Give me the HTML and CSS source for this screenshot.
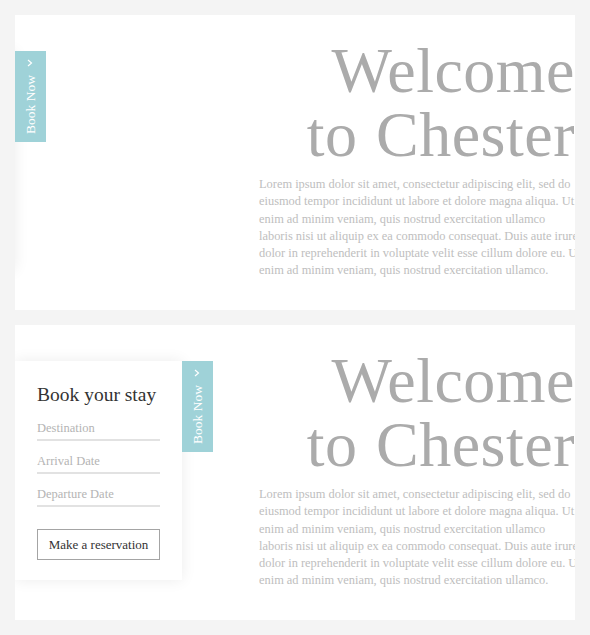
FILE: index.html
```html
<!DOCTYPE html>
<html lang="en">
<head>
    <meta charset="UTF-8">
    <meta name="viewport" content="width=device-width, initial-scale=1.0">
    <title>Welcome to Chester</title>
    <link rel="stylesheet" href="styles.css">
</head>
<body>
    <!-- Panneau 1 : formulaire replié -->
    <section class="panel">
        <aside class="booking closed">
            <h2>Book your stay</h2>
            <input class="field" type="text" placeholder="Destination">
            <input class="field" type="text" placeholder="Arrival Date">
            <input class="field" type="text" placeholder="Departure Date">
            <button class="reserve">Make a reservation</button>
            <button class="book-tab">
                <span>Book Now</span>
                <svg class="chevron" width="6" height="8" viewBox="0 0 6 8"><path d="M1 1l3.5 3L1 7" fill="none" stroke="#fff" stroke-width="1.2"/></svg>
            </button>
        </aside>
        <div class="hero">
            <h1>Welcome<br>to Chester</h1>
            <p>Lorem ipsum dolor sit amet, consectetur adipiscing elit, sed do<br>
               eiusmod tempor incididunt ut labore et dolore magna aliqua. Ut<br>
               enim ad minim veniam, quis nostrud exercitation ullamco<br>
               laboris nisi ut aliquip ex ea commodo consequat. Duis aute irure<br>
               dolor in reprehenderit in voluptate velit esse cillum dolore eu. Ut<br>
               enim ad minim veniam, quis nostrud exercitation ullamco.</p>
        </div>
    </section>

    <!-- Panneau 2 : formulaire ouvert -->
    <section class="panel">
        <aside class="booking">
            <h2>Book your stay</h2>
            <input class="field" type="text" placeholder="Destination">
            <input class="field" type="text" placeholder="Arrival Date">
            <input class="field" type="text" placeholder="Departure Date">
            <button class="reserve">Make a reservation</button>
            <button class="book-tab">
                <span>Book Now</span>
                <svg class="chevron" width="6" height="8" viewBox="0 0 6 8"><path d="M1 1l3.5 3L1 7" fill="none" stroke="#fff" stroke-width="1.2"/></svg>
            </button>
        </aside>
        <div class="hero">
            <h1>Welcome<br>to Chester</h1>
            <p>Lorem ipsum dolor sit amet, consectetur adipiscing elit, sed do<br>
               eiusmod tempor incididunt ut labore et dolore magna aliqua. Ut<br>
               enim ad minim veniam, quis nostrud exercitation ullamco<br>
               laboris nisi ut aliquip ex ea commodo consequat. Duis aute irure<br>
               dolor in reprehenderit in voluptate velit esse cillum dolore eu. Ut<br>
               enim ad minim veniam, quis nostrud exercitation ullamco.</p>
        </div>
    </section>
</body>
</html>
```

FILE: styles.css
```css
body {
    font-family: "Liberation Serif", "Times New Roman", serif;
    margin: 0;
    padding: 15px;
    display: flex;
    flex-direction: column;
    gap: 15px;
    background-color: #f4f4f4;
}

.panel {
    position: relative;
    height: 295px;
    background-color: #fff;
    overflow: hidden;
}

/* Formulaire de réservation */
.booking {
    position: absolute;
    top: 36px;
    left: 0;
    width: 167px;
    height: 219px;
    box-sizing: border-box;
    padding: 21px 22px 0;
    display: flex;
    flex-direction: column;
    background-color: #fff;
    box-shadow: 0 0 14px rgba(0, 0, 0, 0.08);
    transition: transform 0.3s;
}

.booking.closed {
    transform: translateX(-100%);
}

.booking h2 {
    margin: 0;
    font-size: 19.5px;
    font-weight: normal;
    line-height: 26px;
    color: #333;
}

.field {
    width: 123px;
    height: 33px;
    box-sizing: border-box;
    padding: 9px 0 0;
    border: none;
    border-bottom: 2px solid #e2e2e2;
    font-family: inherit;
    font-size: 12.5px;
    color: #555;
    outline: none;
}

.field::placeholder {
    color: #b4b4b4;
}

.reserve {
    width: 123px;
    height: 31px;
    margin-top: 22px;
    padding: 0;
    background: #fff;
    border: 1px solid #a4a4a4;
    font-family: inherit;
    font-size: 13px;
    color: #333;
    cursor: pointer;
}

/* Onglet "Book Now" */
.book-tab {
    position: absolute;
    top: 0;
    left: 100%;
    width: 31px;
    height: 91px;
    padding: 0;
    border: none;
    background-color: #9fd2d8;
    color: #fff;
    font-family: inherit;
    font-size: 13.5px;
    writing-mode: vertical-rl;
    transform: rotate(180deg);
    display: flex;
    align-items: center;
    justify-content: center;
    gap: 8px;
    cursor: pointer;
}

.chevron {
    transform: rotate(180deg);
}

/* Texte d'accueil */
.hero {
    margin-left: 244px;
    padding-top: 24px;
}

.hero h1 {
    margin: 0;
    font-size: 64px;
    font-weight: normal;
    line-height: 64px;
    letter-spacing: 0.5px;
    word-spacing: 2px;
    text-align: right;
    white-space: nowrap;
    color: #ababab;
}

.hero p {
    margin: 9px 0 0;
    font-size: 12.4px;
    line-height: 17.3px;
    white-space: nowrap;
    color: #bebebe;
}
```
